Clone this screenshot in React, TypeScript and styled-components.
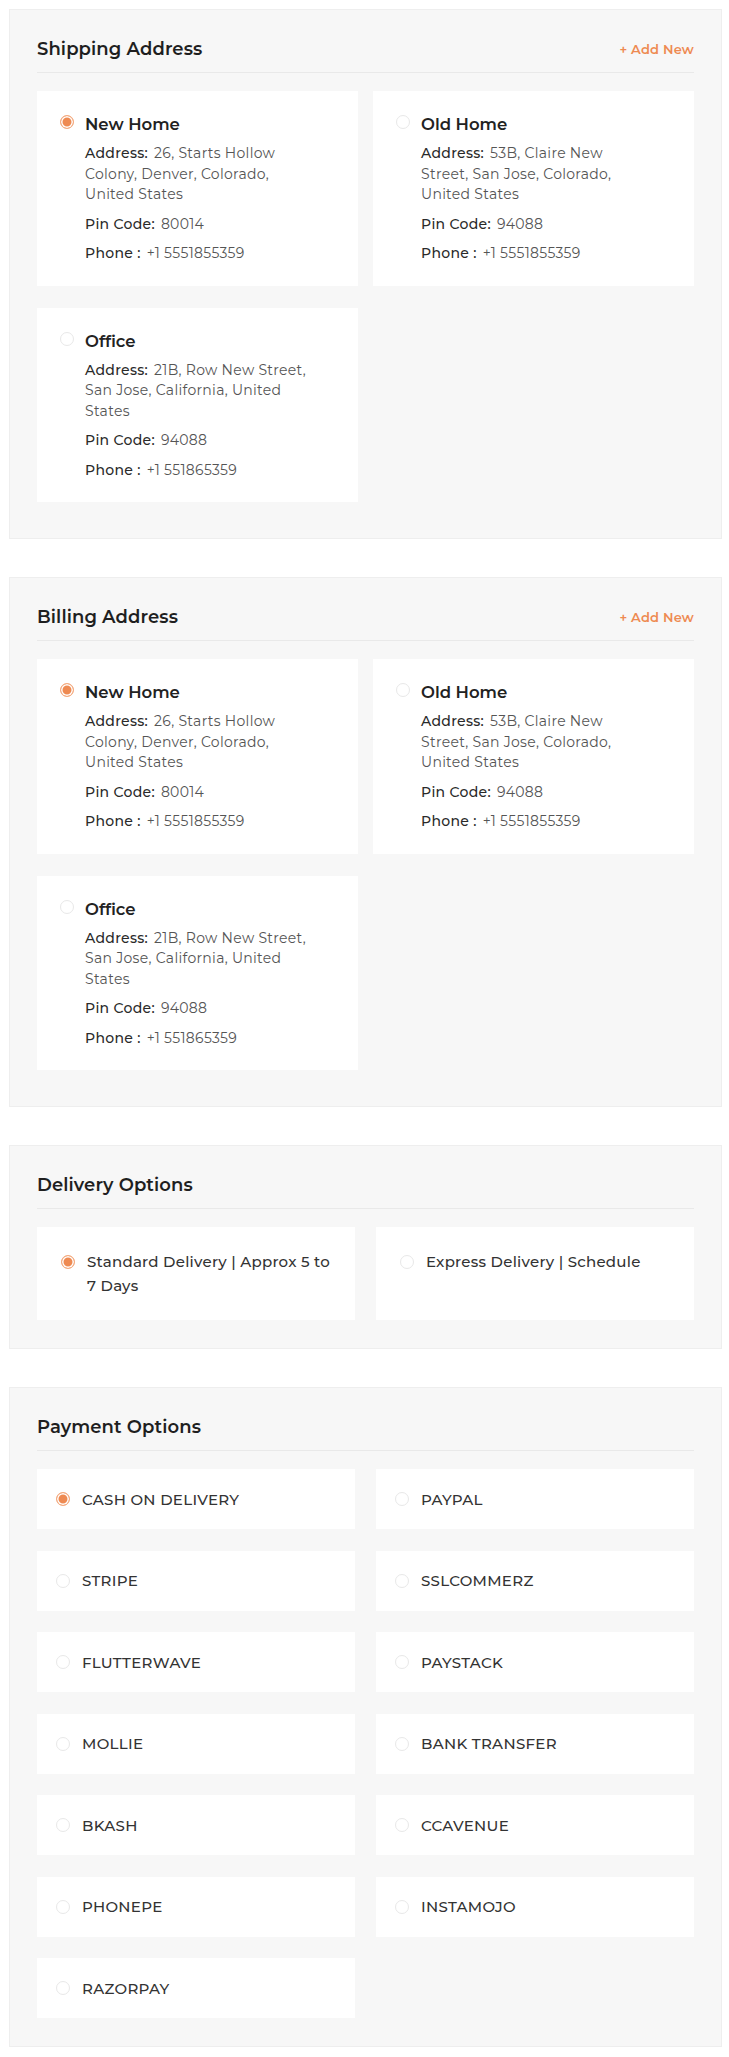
import React from 'react'
import styled, { createGlobalStyle } from 'styled-components'

const GlobalStyle = createGlobalStyle`
  * { box-sizing: border-box; }
  body {
    margin: 0;
    background: #ffffff;
    font-family: "Montserrat", Inter, "Open Sans", sans-serif;
    color: #333333;
  }
`

const ORANGE = '#ee8a52'

const Page = styled.div`
  display: flex;
  flex-direction: column;
  gap: 38px;
  padding: 9px 7px 9px 9px;
`

const Panel = styled.section<{ $bottom: number }>`
  background: #f7f7f7;
  border: 1px solid #eeeeee;
  padding: 27px 27px ${p => p.$bottom}px 27px;
`

const PanelHeader = styled.div`
  display: flex;
  align-items: center;
  justify-content: space-between;
  padding-bottom: 11px;
  border-bottom: 1px solid #e9e9e9;
  margin-bottom: 18px;
`

const PanelTitle = styled.h3`
  margin: 0;
  font-size: 18px;
  line-height: 24px;
  font-weight: 600;
  letter-spacing: 0.1px;
  color: #1f1f1f;
`

const AddNew = styled.a`
  font-size: 13px;
  font-weight: 600;
  letter-spacing: 0.2px;
  color: ${ORANGE};
  text-decoration: none;
  cursor: pointer;
`

const AddressGrid = styled.div`
  display: grid;
  grid-template-columns: 1fr 1fr;
  column-gap: 15px;
  row-gap: 22px;
`

const OptionGrid = styled.div`
  display: grid;
  grid-template-columns: 1fr 1fr;
  column-gap: 21px;
  row-gap: 21.5px;
`

const Radio = styled.span<{ $checked?: boolean; $top?: number }>`
  flex-shrink: 0;
  width: 14px;
  height: 14px;
  margin-top: ${p => p.$top ?? 0}px;
  border-radius: 50%;
  border: 1px solid ${p => (p.$checked ? '#f4ab80' : '#e8e8e8')};
  background: ${p => (p.$checked ? ORANGE : '#ffffff')};
  box-shadow: ${p => (p.$checked ? 'inset 0 0 0 1.5px #ffffff' : 'none')};
`

const AddressCard = styled.div`
  display: flex;
  gap: 11px;
  background: #ffffff;
  padding: 22px 40px 22px 23px;
  cursor: pointer;
`

const AddressBody = styled.div`
  display: flex;
  flex-direction: column;
`

const Name = styled.div`
  font-size: 16.5px;
  line-height: 22px;
  font-weight: 600;
  color: #222222;
  margin-bottom: 8px;
`

const Line = styled.p`
  margin: 0 0 9px;
  font-size: 14px;
  line-height: 20.5px;
  letter-spacing: 0.3px;
  color: #555555;

  &:last-child {
    margin-bottom: 0;
  }
`

const Label = styled.span`
  font-weight: 500;
  color: #2a2a2a;
  margin-right: 6px;
`

const DeliveryCard = styled.div`
  display: flex;
  align-items: flex-start;
  gap: 12px;
  background: #ffffff;
  padding: 22.5px 17px 22.5px 24px;
  cursor: pointer;
`

const DeliveryText = styled.span`
  font-size: 15px;
  line-height: 24px;
  font-weight: 500;
  letter-spacing: 0.25px;
  color: #333333;
`

const PaymentCard = styled.div`
  display: flex;
  align-items: center;
  gap: 12px;
  height: 60px;
  padding: 0 19px;
  background: #ffffff;
  cursor: pointer;
`

const PaymentText = styled.span`
  font-size: 15px;
  font-weight: 500;
  letter-spacing: 0.3px;
  color: #333333;
`

type Address = {
  name: string
  address: string
  pin: string
  phone: string
}

const addresses: Address[] = [
  {
    name: 'New Home',
    address: '26, Starts Hollow Colony, Denver, Colorado, United States',
    pin: '80014',
    phone: '+1 5551855359',
  },
  {
    name: 'Old Home',
    address: '53B, Claire New Street, San Jose, Colorado, United States',
    pin: '94088',
    phone: '+1 5551855359',
  },
  {
    name: 'Office',
    address: '21B, Row New Street, San Jose, California, United States',
    pin: '94088',
    phone: '+1 551865359',
  },
]

const deliveryOptions = ['Standard Delivery | Approx 5 to 7 Days', 'Express Delivery | Schedule']

const paymentOptions = [
  'CASH ON DELIVERY',
  'PAYPAL',
  'STRIPE',
  'SSLCOMMERZ',
  'FLUTTERWAVE',
  'PAYSTACK',
  'MOLLIE',
  'BANK TRANSFER',
  'BKASH',
  'CCAVENUE',
  'PHONEPE',
  'INSTAMOJO',
  'RAZORPAY',
]

function AddressPanel({ title }: { title: string }) {
  return (
    <Panel $bottom={36}>
      <PanelHeader>
        <PanelTitle>{title}</PanelTitle>
        <AddNew>+ Add New</AddNew>
      </PanelHeader>
      <AddressGrid>
        {addresses.map((a, i) => (
          <AddressCard key={a.name}>
            <Radio $checked={i === 0} $top={2} />
            <AddressBody>
              <Name>{a.name}</Name>
              <Line>
                <Label>Address:</Label>
                {a.address}
              </Line>
              <Line>
                <Label>Pin Code:</Label>
                {a.pin}
              </Line>
              <Line>
                <Label>Phone :</Label>
                {a.phone}
              </Line>
            </AddressBody>
          </AddressCard>
        ))}
      </AddressGrid>
    </Panel>
  )
}

export default function App() {
  return (
    <>
      <GlobalStyle />
      <Page>
        <AddressPanel title="Shipping Address" />
        <AddressPanel title="Billing Address" />

        <Panel $bottom={28}>
          <PanelHeader>
            <PanelTitle>Delivery Options</PanelTitle>
          </PanelHeader>
          <OptionGrid>
            {deliveryOptions.map((d, i) => (
              <DeliveryCard key={d}>
                <Radio $checked={i === 0} $top={5} />
                <DeliveryText>{d}</DeliveryText>
              </DeliveryCard>
            ))}
          </OptionGrid>
        </Panel>

        <Panel $bottom={28}>
          <PanelHeader>
            <PanelTitle>Payment Options</PanelTitle>
          </PanelHeader>
          <OptionGrid>
            {paymentOptions.map((p, i) => (
              <PaymentCard key={p}>
                <Radio $checked={i === 0} />
                <PaymentText>{p}</PaymentText>
              </PaymentCard>
            ))}
          </OptionGrid>
        </Panel>
      </Page>
    </>
  )
}
